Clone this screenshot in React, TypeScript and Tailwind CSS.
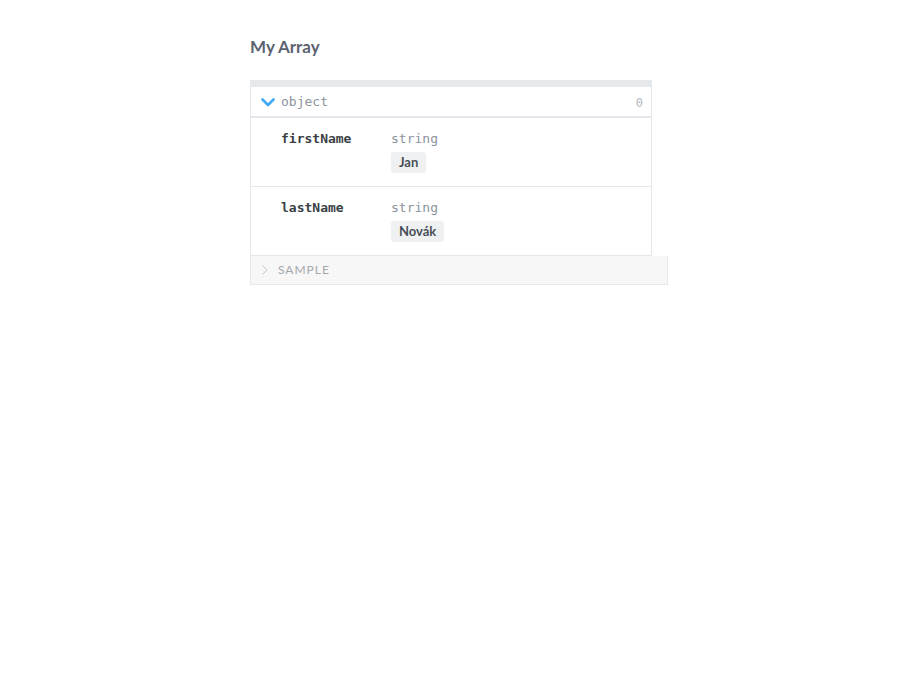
import { ChevronRight } from 'lucide-react';

const fields = [
  { name: 'firstName', type: 'string', example: 'Jan' },
  { name: 'lastName', type: 'string', example: 'Novák' },
];

const mono = { fontFamily: '"DejaVu Sans Mono", "Liberation Mono", monospace' };

export default function App() {
  return (
    <div className="min-h-screen bg-white px-[250px] pt-[34px]" style={{ fontFamily: 'Lato, "Open Sans", sans-serif' }}>
      <h1 className="text-[17px] leading-[26px] font-bold text-[#5c6370]">My Array</h1>

      <div className="mt-[20px] w-[418px]">
        <div className="w-[402px] border-x border-[#e3e6ea] bg-white">
          <div className="-mx-px h-[7px] bg-[#e6e9ec]" />
          {/* object header */}
          <div className="flex h-[31px] items-center border-b-2 border-[#e3e6ea] pl-[10px] pr-[8px] pt-[1px]">
            <svg width="14" height="9" viewBox="0 0 14 9" fill="none" className="text-[#3fa9f5]">
              <path d="M1.5 1.5 7 7l5.5-5.5" stroke="currentColor" strokeWidth="2.6" strokeLinecap="round" strokeLinejoin="round" />
            </svg>
            <span className="ml-[6px] text-[13px] text-[#8c939d]" style={mono}>
              object
            </span>
            <span className="ml-auto pt-[2px] text-[12px] text-[#b2b7bd]" style={mono}>
              0
            </span>
          </div>
          {fields.map((f) => (
            <div key={f.name} className="flex h-[69px] border-b border-[#e3e6ea] pt-[13px]">
              <div className="w-[140px] pl-[30px] text-[13px] font-bold leading-[16px] text-[#3a3f45]" style={mono}>
                {f.name}
              </div>
              <div className="flex flex-col items-start">
                <span className="text-[13px] leading-[16px] text-[#8c939d]" style={mono}>
                  {f.type}
                </span>
                <span className="mt-[5px] rounded-[3px] bg-[#eef0f2] px-[8px] text-[13px] font-bold leading-[21px] text-[#4a4f57]">
                  {f.example}
                </span>
              </div>
            </div>
          ))}
        </div>
        <div className="flex h-[29px] items-center border border-t-0 border-[#e8e8e8] bg-[#f7f7f7] pl-[6px]">
          <ChevronRight size={16} strokeWidth={1.5} className="text-[#c2c6ca]" />
          <span className="ml-[5px] text-[12px] tracking-[1px] text-[#a3a8ad]">SAMPLE</span>
        </div>
      </div>
    </div>
  );
}
